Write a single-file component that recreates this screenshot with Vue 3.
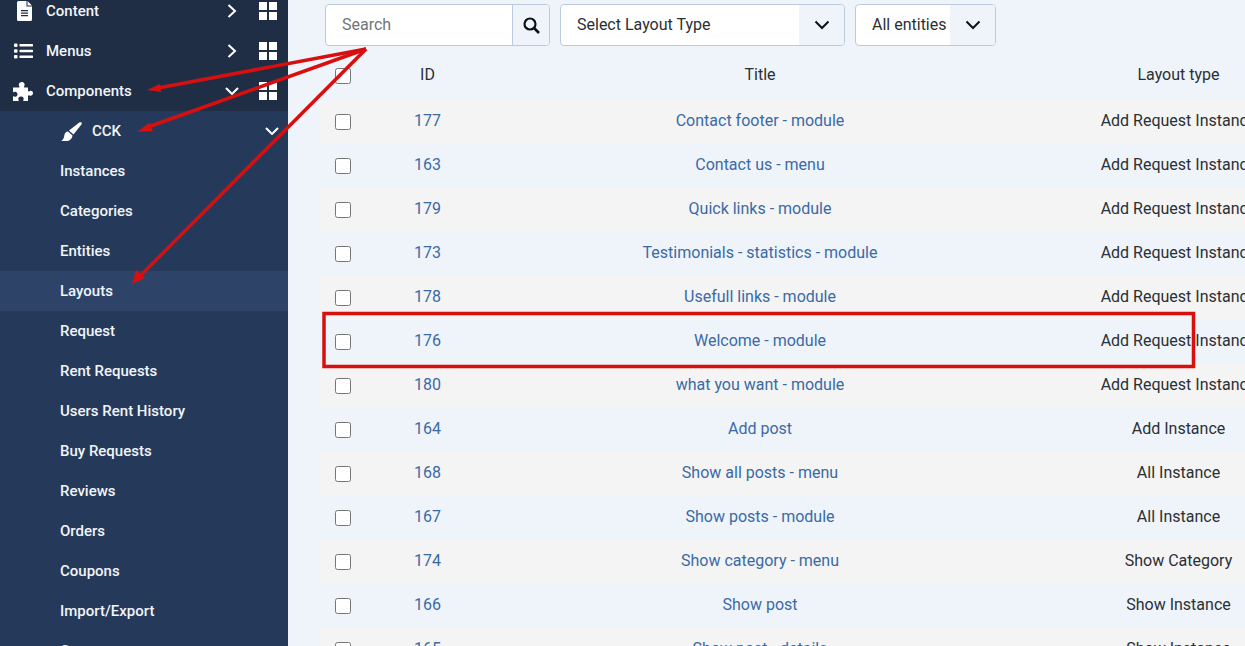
<script setup>
const top = [
  { label: 'Content', icon: 'file', open: false },
  { label: 'Menus', icon: 'list', open: false },
  { label: 'Components', icon: 'puzzle', open: true },
]
const subs = ['Instances', 'Categories', 'Entities', 'Layouts', 'Request', 'Rent Requests', 'Users Rent History', 'Buy Requests', 'Reviews', 'Orders', 'Coupons', 'Import/Export', 'Gustom']
const rows = [
  ['177', 'Contact footer - module', 'Add Request Instance'],
  ['163', 'Contact us - menu', 'Add Request Instance'],
  ['179', 'Quick links - module', 'Add Request Instance'],
  ['173', 'Testimonials - statistics - module', 'Add Request Instance'],
  ['178', 'Usefull links - module', 'Add Request Instance'],
  ['176', 'Welcome - module', 'Add Request Instance'],
  ['180', 'what you want - module', 'Add Request Instance'],
  ['164', 'Add post', 'Add Instance'],
  ['168', 'Show all posts - menu', 'All Instance'],
  ['167', 'Show posts - module', 'All Instance'],
  ['174', 'Show category - menu', 'Show Category'],
  ['166', 'Show post', 'Show Instance'],
  ['165', 'Show post - details', 'Show Instance'],
]
</script>

<template>
  <div class="page">
    <aside class="side">
      <div v-for="t in top" :key="t.label" class="item">
        <span class="ico">
          <svg v-if="t.icon === 'file'" width="16" height="20" viewBox="0 0 16 20"><path fill="#fff" d="M1.5 0H9.5V5.5H15V18.5A1.5 1.5 0 0 1 13.500 20H1.500A1.500 1.500 0 0 1 0 18.500V1.500A1.500 1.500 0 0 1 1.500 0ZM10.500 0 15 4.500H10.500ZM4 9V10.200H11V9ZM4 11.500V12.700H11V11.500ZM4 14V15.200H11V14Z" fill-rule="evenodd"/></svg>
          <svg v-else-if="t.icon === 'list'" width="19" height="16" viewBox="0 0 19 16"><g fill="#fff"><rect x="0" y="0.500" width="3.500" height="3.500" rx="1"/><rect x="0" y="6.300" width="3.500" height="3.500" rx="1"/><rect x="0" y="12" width="3.500" height="3.500" rx="1"/><rect x="5.500" y="1" width="13.500" height="2.400" rx="0.600"/><rect x="5.500" y="6.800" width="13.500" height="2.400" rx="0.600"/><rect x="5.500" y="12.600" width="13.500" height="2.400" rx="0.600"/></g></svg>
          <svg v-else width="20" height="19" viewBox="0 0 20 19"><path fill="#fff" d="M0 5.500H5.500C6.500 5.500 6.800 4.800 6.200 4 5.500 3 5.800 0 8.800 0S12 3 11.300 4C10.700 4.800 11 5.500 12 5.500H15V8.500C15 9.500 15.700 9.700 16.500 9.200 17.500 8.500 20 8.800 20 11.300S17.500 14 16.500 13.400C15.700 12.900 15 13.200 15 14.200V19H10.800C10.200 19 10 18.400 10.500 17.700 11.200 16.700 10.500 14.500 8 14.500S4.800 16.700 5.500 17.700C6 18.400 5.800 19 5.200 19H0V14.800C0 14.200 .6 14 1.200 14.400 2.300 15.200 4.500 14.500 4.500 12.200S2.300 9.200 1.200 10C.6 10.400 0 10.200 0 9.600Z"/></svg>
        </span>
        <span class="label">{{ t.label }}</span>
        <svg v-if="t.open" class="chev" width="14" height="8" viewBox="0 0 14 8"><path d="M1 1 7 7 13 1" fill="none" stroke="#fff" stroke-width="2"/></svg>
        <svg v-else class="chev" width="10" height="14" viewBox="0 0 10 14"><path d="M1.500 1 8 7 1.500 13" fill="none" stroke="#fff" stroke-width="2"/></svg>
        <span class="grid4"><i></i><i></i><i></i><i></i></span>
      </div>
      <div class="sub">
        <div class="cck">
          <svg class="brush" width="21" height="19" viewBox="0 0 21 19"><path fill="#fff" d="M20.500 0.500C21 1 20.800 2 20.200 2.800L12.500 12.500 8 8.500 18.300 0.600C19 0 20 0 20.500 0.500ZM7 9.500 11.500 13.500C11.200 17 8.500 19 5 19H0C2 18 2.800 16.500 3.200 14 3.600 11 5 9.500 7 9.500Z"/></svg>
          <span class="label">CCK</span>
          <svg class="chev2" width="14" height="8" viewBox="0 0 14 8"><path d="M1 1 7 7 13 1" fill="none" stroke="#fff" stroke-width="2"/></svg>
        </div>
        <div v-for="s in subs" :key="s" class="subitem" :class="{ on: s === 'Layouts' }">{{ s }}</div>
      </div>
    </aside>

    <main class="main">
      <div class="tools">
        <div class="search">
          <span class="ph">Search</span>
          <span class="sbtn">
            <svg width="17" height="17" viewBox="0 0 17 17"><circle cx="7" cy="7" r="5.500" fill="none" stroke="#111" stroke-width="2.200"/><path d="M11 11 16 16" stroke="#111" stroke-width="2.600"/></svg>
          </span>
        </div>
        <div class="select wide">
          <span class="val">Select Layout Type</span>
          <span class="arrow"><svg width="16" height="10" viewBox="0 0 16 10"><path d="M1.500 1.500 8 8 14.500 1.500" fill="none" stroke="#111" stroke-width="2"/></svg></span>
        </div>
        <div class="select narrow">
          <span class="val">All entities</span>
          <span class="arrow"><svg width="16" height="10" viewBox="0 0 16 10"><path d="M1.500 1.500 8 8 14.500 1.500" fill="none" stroke="#111" stroke-width="2"/></svg></span>
        </div>
      </div>
      <div class="table">
        <div class="row head">
          <span class="c0"><span class="box"></span></span>
          <span class="c">ID</span>
          <span class="c">Title</span>
          <span class="c">Layout type</span>
        </div>
        <div v-for="r in rows" :key="r[0]" class="row">
          <span class="c0"><span class="box"></span></span>
          <span class="c link">{{ r[0] }}</span>
          <span class="c link">{{ r[1] }}</span>
          <span class="c type">{{ r[2] }}</span>
        </div>
      </div>
    </main>

    <svg class="marks" width="1245" height="646" viewBox="0 0 1245 646">
      <g fill="none" stroke="#d70f0f" stroke-width="3.500">
        <path d="M366 49 158 88"/>
        <path d="M366 49 148 127"/>
        <path d="M366 49 140 276"/>
        <rect x="324" y="313.500" width="869.500" height="53"/>
      </g>
      <g fill="#d70f0f">
        <path d="M147 90 160 84 161 92Z"/>
        <path d="M137 132 149 123 153 131Z"/>
        <path d="M132 284 136 270 145 278Z"/>
      </g>
    </svg>
  </div>
</template>

<style>
html, body { margin: 0; overflow: hidden; }
</style>

<style scoped>
.page {
  position: relative;
  width: 1245px;
  height: 646px;
  overflow: hidden;
  display: flex;
  background: #eff4fb;
  font-family: Roboto, "Liberation Sans", sans-serif;
}
.side {
  width: 288px;
  flex: none;
  margin-top: -9px;
  background: #1f2d45;
  color: #f1f4f8;
  font-size: 15px;
  font-weight: 500;
}
.item {
  height: 40px;
  display: flex;
  align-items: center;
  position: relative;
}
.ico {
  width: 46px;
  flex: none;
  display: flex;
  justify-content: flex-end;
  padding-right: 13px;
  box-sizing: border-box;
}
.label { flex: 1; }
.item .chev { position: absolute; left: 232px; margin: 0; transform: translateX(-50%); }
.grid4 {
  display: grid;
  grid-template-columns: 8px 8px;
  grid-template-rows: 8px 8px;
  gap: 2px;
  margin-right: 11px;
}
.grid4 i { background: #fff; display: block; }
.sub { background: #253a5a; }
.cck {
  height: 40px;
  display: flex;
  align-items: center;
  padding-left: 61px;
}
.brush { margin-right: 10px; }
.chev2 { margin-right: 9px; }
.subitem {
  height: 40px;
  line-height: 40px;
  padding-left: 60px;
  font-size: 15px;
}
.subitem.on { background: #2d4468; }
.main {
  flex: 1;
  min-width: 0;
  padding-left: 32px;
  color: #2b2f33;
  font-size: 16px;
}
.tools {
  display: flex;
  gap: 10px;
  padding: 4px 0 0 5px;
  height: 42px;
}
.search, .select {
  display: flex;
  height: 42px;
  box-sizing: border-box;
  border: 1px solid #bccadd;
  border-radius: 4px;
  background: #fff;
  overflow: hidden;
}
.search { width: 225px; }
.ph {
  flex: 1;
  padding-left: 16px;
  line-height: 40px;
  color: #6f757b;
}
.sbtn {
  width: 36px;
  border-left: 1px solid #bccadd;
  background: #eff4fb;
  display: flex;
  align-items: center;
  justify-content: center;
}
.val {
  flex: 1;
  padding-left: 16px;
  line-height: 40px;
  white-space: nowrap;
}
.arrow {
  width: 45px;
  background: #eff4fb;
  display: flex;
  align-items: center;
  justify-content: center;
}
.wide { width: 285px; }
.narrow { width: 141px; }
.table { margin-top: 6px; width: 1006px; }
.row {
  display: grid;
  grid-template-columns: 46px 123px 542px 295px;
  height: 44px;
  align-items: center;
  text-align: center;
  white-space: nowrap;
}
.row:nth-child(even) { background: #f4f4f4; }
.head { height: 48px; }
.c { padding-bottom: 4px; }
.c0 { display: flex; justify-content: center; }
.box {
  width: 16px;
  height: 16px;
  box-sizing: border-box;
  border: 1px solid #767676;
  border-radius: 2.500px;
  background: #fff;
}
.link { color: #3a6aa6; }
.marks { position: absolute; left: 0; top: 0; pointer-events: none; }
</style>
